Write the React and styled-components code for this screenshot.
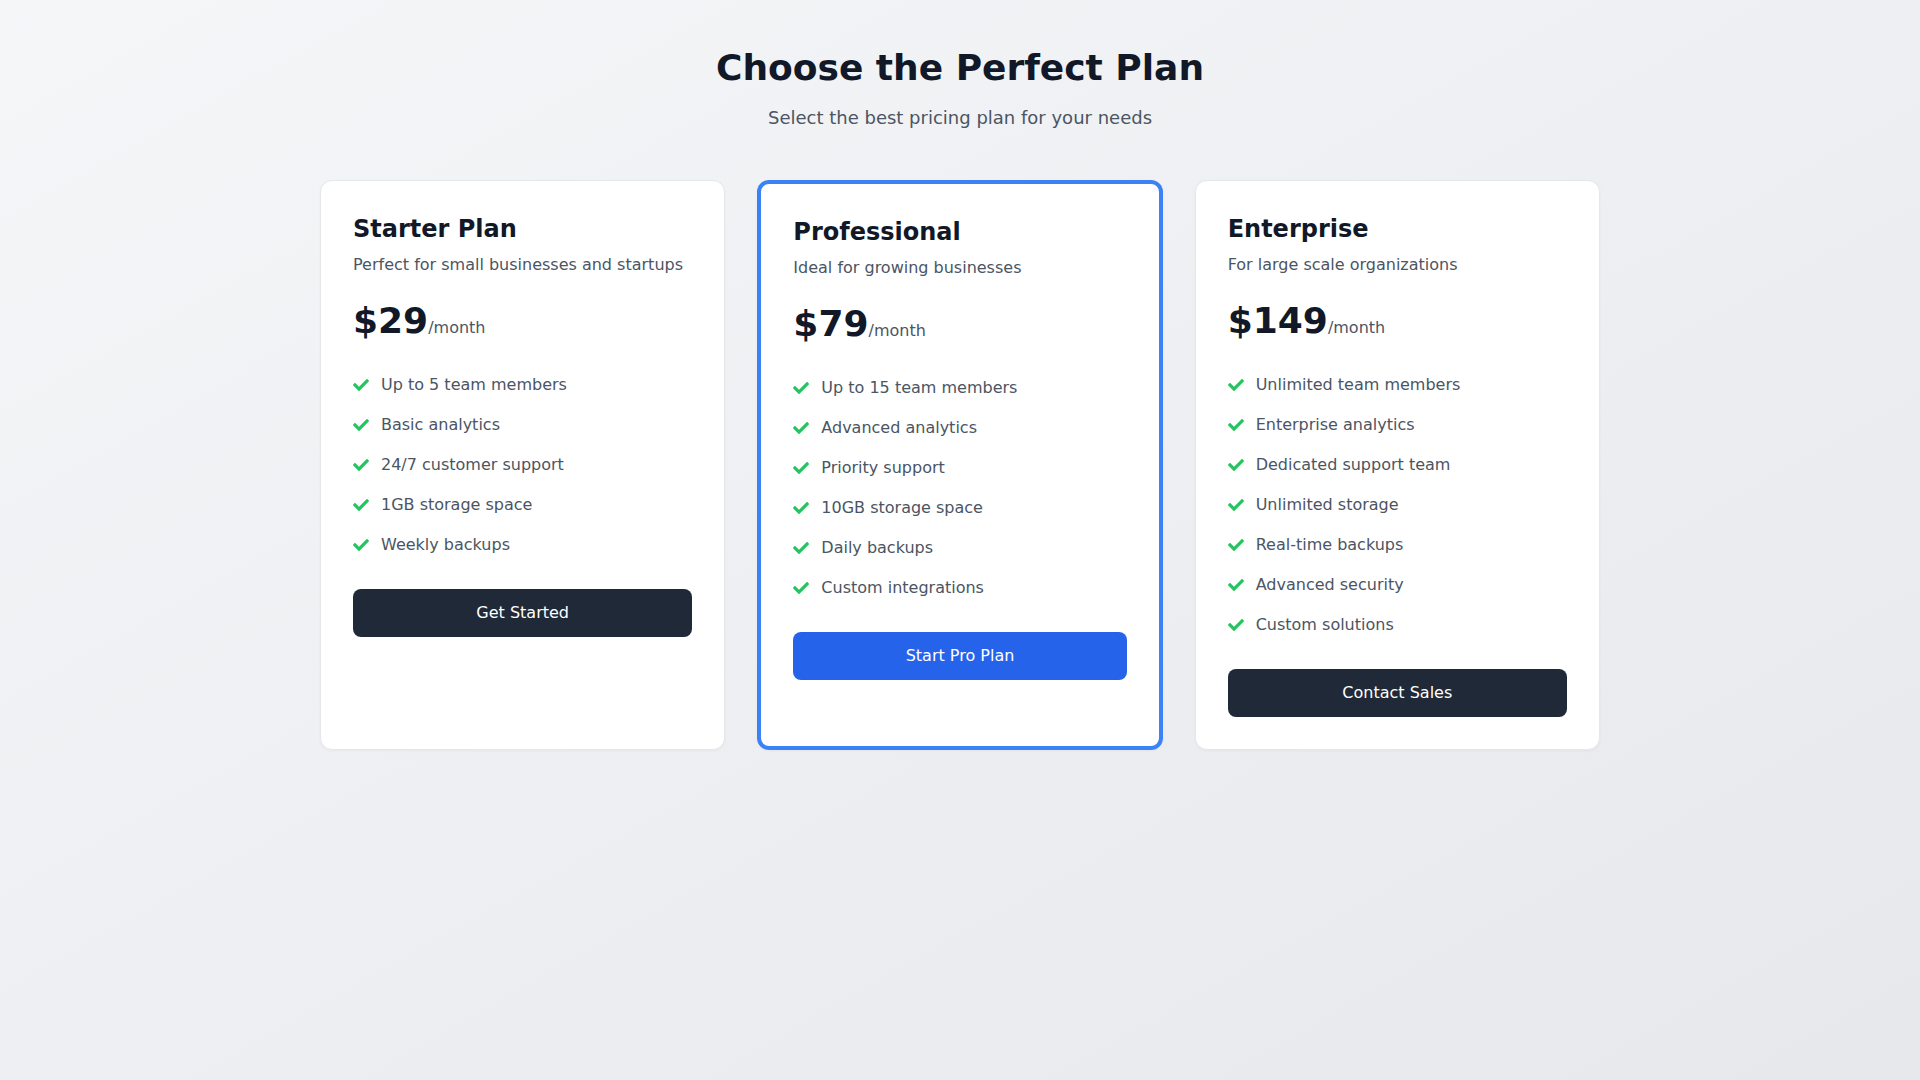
import React from "react";
import styled, { createGlobalStyle } from "styled-components";
import { FaCheck } from "react-icons/fa";

const plans = [
    {
        name: "Starter Plan",
        desc: "Perfect for small businesses and startups",
        price: 29,
        features: ["Up to 5 team members", "Basic analytics", "24/7 customer support", "1GB storage space", "Weekly backups"],
        cta: "Get Started",
    },
    {
        name: "Professional",
        desc: "Ideal for growing businesses",
        price: 79,
        features: ["Up to 15 team members", "Advanced analytics", "Priority support", "10GB storage space", "Daily backups", "Custom integrations"],
        cta: "Start Pro Plan",
        featured: true,
    },
    {
        name: "Enterprise",
        desc: "For large scale organizations",
        price: 149,
        features: ["Unlimited team members", "Enterprise analytics", "Dedicated support team", "Unlimited storage", "Real-time backups", "Advanced security", "Custom solutions"],
        cta: "Contact Sales",
    },
];

export default function App(){
    return(
        <>
            <GlobalStyle />
            <Page>
                <Header>
                    <Title>Choose the Perfect Plan</Title>
                    <Subtitle>Select the best pricing plan for your needs</Subtitle>
                </Header>
                <Grid>
                    {plans.map((plan) => (
                        <Card key={plan.name} featured={plan.featured}>
                            <PlanName>{plan.name}</PlanName>
                            <PlanDesc>{plan.desc}</PlanDesc>
                            <PriceRow>
                                <Price>${plan.price}</Price>
                                <Period>/month</Period>
                            </PriceRow>
                            <FeatureList>
                                {plan.features.map((f) => (
                                    <Feature key={f}>
                                        <CheckIcon size={16} />
                                        <span>{f}</span>
                                    </Feature>
                                ))}
                            </FeatureList>
                            <CtaButton featured={plan.featured}>{plan.cta}</CtaButton>
                        </Card>
                    ))}
                </Grid>
            </Page>
        </>
    );
}

const GlobalStyle = createGlobalStyle`
    * { box-sizing: border-box; }
    body {
        margin: 0;
        font-family: "DejaVu Sans", "Liberation Sans", sans-serif;
    }
`;

const Page = styled.div`
    min-height: 100vh;
    background: linear-gradient(to bottom right, #f5f6f8, #e7e8ec);
    padding: 48px 16px;
`;

const Header = styled.div`
    text-align: center;
    margin-bottom: 48px;
`;

const Title = styled.h1`
    margin: 0 0 16px;
    font-size: 36px;
    line-height: 40px;
    font-weight: 700;
    color: #111827;
`;

const Subtitle = styled.p`
    margin: 0;
    font-size: 18px;
    line-height: 28px;
    color: #4b5563;
`;

const Grid = styled.div`
    max-width: 1280px;
    margin: 0 auto;
    display: grid;
    grid-template-columns: repeat(3, 1fr);
    gap: 32px;
`;

const Card = styled.div`
    background: #ffffff;
    border-radius: 12px;
    border: ${({ featured }) => (featured ? "4px solid #3b82f6" : "1px solid #e5e7eb")};
    box-shadow: 0 1px 3px rgba(0, 0, 0, 0.04);
    padding: 32px;
`;

const PlanName = styled.h2`
    margin: 0 0 8px;
    font-size: 24px;
    line-height: 32px;
    font-weight: 700;
    color: #111827;
`;

const PlanDesc = styled.p`
    margin: 0 0 24px;
    font-size: 16px;
    line-height: 24px;
    color: #4b5563;
`;

const PriceRow = styled.div`
    display: flex;
    align-items: baseline;
    margin-bottom: 32px;
`;

const Price = styled.span`
    font-size: 36px;
    line-height: 40px;
    font-weight: 700;
    color: #111827;
`;

const Period = styled.span`
    font-size: 16px;
    color: #4b5563;
`;

const FeatureList = styled.ul`
    list-style: none;
    margin: 0 0 32px;
    padding: 0;
    display: flex;
    flex-direction: column;
    gap: 16px;
`;

const Feature = styled.li`
    display: flex;
    align-items: center;
    font-size: 16px;
    line-height: 24px;
    color: #4b5563;
`;

const CheckIcon = styled(FaCheck)`
    color: #22c55e;
    margin-right: 12px;
    flex-shrink: 0;
`;

const CtaButton = styled.button`
    width: 100%;
    padding: 12px 0;
    border: none;
    border-radius: 8px;
    font-family: inherit;
    font-size: 16px;
    line-height: 24px;
    color: #ffffff;
    background-color: ${({ featured }) => (featured ? "#2563eb" : "#1f2937")};
    cursor: pointer;
`;
